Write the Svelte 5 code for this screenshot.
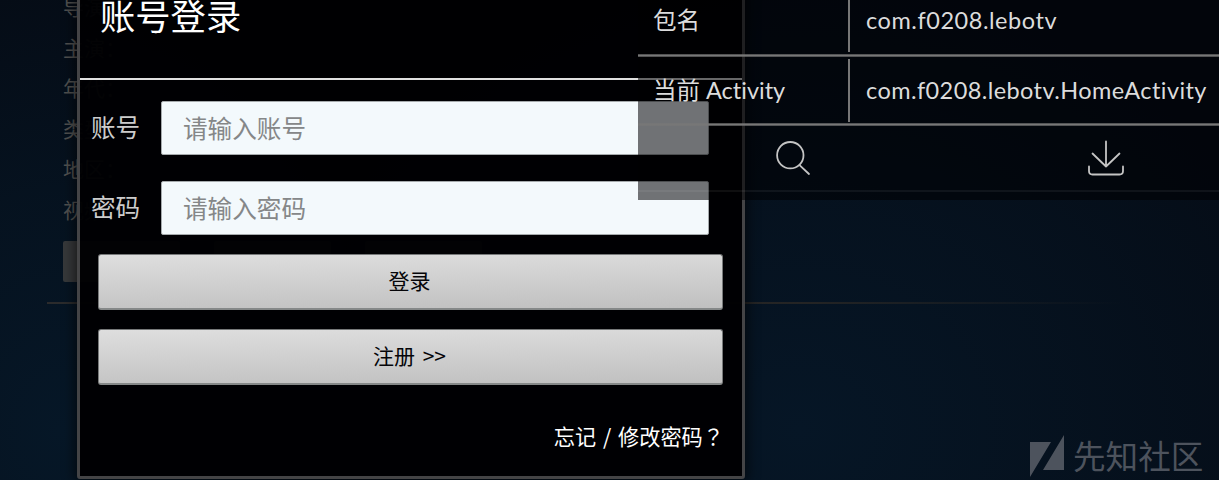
<script>
  const facts = ['导演：', '主演：', '年代：', '类型：', '地区：', '视频：'];
  const fields = [
    { label: '账号', hint: '请输入账号' },
    { label: '密码', hint: '请输入密码' }
  ];
  const rows = [
    { name: '包名', value: 'com.f0208.lebotv' },
    { name: '当前 Activity', value: 'com.f0208.lebotv.HomeActivity' }
  ];
</script>

<main class="screen">
  <section class="details">
    <div class="facts">
      {#each facts as fact}
        <p>{fact}</p>
      {/each}
    </div>
    <div class="tabs"><i></i><i></i><i></i></div>
    <hr />
  </section>

  <section class="dialog">
    <h1>账号登录</h1>
    <form onsubmit={(e) => e.preventDefault()}>
      {#each fields as field}
        <div class="field">
          <span class="label">{field.label}</span>
          <div class="box">{field.hint}</div>
        </div>
      {/each}
      <button class="first">登录</button>
      <button>注册 &gt;&gt;</button>
    </form>
    <p class="forgot">忘记 / 修改密码<span>？</span></p>
  </section>

  <aside class="inspector">
    {#each rows as row}
      <div class="row">
        <span class="name">{row.name}</span>
        <span class="value">{row.value}</span>
      </div>
    {/each}
    <div class="tools">
      <svg width="36" height="36" viewBox="0 0 36 36">
        <circle cx="15.3" cy="15.2" r="13.2" />
        <path d="M24.8 25.3L34 34" />
      </svg>
      <svg width="38" height="36" viewBox="0 0 38 36">
        <path d="M19 1.5v25M5.5 13.5L19 26.5L32.5 13.5M2 26.5v4.5q0 3.5 3.5 3.5h27q3.5 0 3.5-3.5v-4.5" />
      </svg>
    </div>
  </aside>

  <div class="brand">
    <svg width="34" height="42" viewBox="0 0 34 42">
      <path d="M0 7H21L0 42ZM34 0V35H13Z" />
    </svg>
    <span>先知社区</span>
  </div>
</main>

<style>
  :global(body) {
    margin: 0;
    background: #fff;
  }
  .screen {
    position: relative;
    width: 1219px;
    height: 480px;
    overflow: hidden;
    background:
      radial-gradient(ellipse 560px 480px at 800px 430px, #061626 0%, #06152499 50%, transparent 100%),
      radial-gradient(ellipse 330px 440px at 60px 430px, #061727 0%, #06162599 55%, transparent 100%),
      #050c16;
    font-family: 'Noto Sans CJK SC', sans-serif;
  }
  p,
  h1 {
    margin: 0;
    font-weight: 400;
  }
  .details {
    padding-left: 63px;
  }
  .facts {
    height: 241px;
    margin-top: -14px;
    margin-bottom: 14px;
    color: #50504f;
    font-size: 21px;
    line-height: 40.5px;
  }
  .tabs {
    display: flex;
    gap: 34px;
    height: 41px;
  }
  .tabs i {
    width: 117px;
    background: #36383a;
    border-radius: 2px;
  }
  hr {
    margin: 20px 0 0 -16px;
    border: 0;
    height: 2px;
    background: linear-gradient(90deg, #2b2b2c, #242424 65%, transparent 92%);
  }
  .dialog {
    position: absolute;
    left: 77px;
    top: -30px;
    box-sizing: border-box;
    width: 668px;
    height: 509px;
    border: 3px solid #444446;
    border-radius: 3px;
    background: rgba(0, 0, 2, 0.96);
    background-clip: padding-box;
    box-shadow: 0 0 12px 3px rgba(0, 0, 0, 0.55);
    color: #fff;
  }
  h1 {
    height: 105px;
    padding-left: 20px;
    border-bottom: 2px solid #e0e0e0;
    font-size: 35.3px;
    line-height: 84px;
  }
  form {
    padding-top: 21px;
  }
  .field {
    display: flex;
    align-items: center;
    height: 54px;
    margin: 0 0 26px 11px;
    font-size: 24.6px;
  }
  .label {
    width: 70px;
    height: 54px;
    color: #ccc;
    line-height: 51px;
  }
  .box {
    box-sizing: border-box;
    width: 548px;
    height: 54px;
    padding-left: 21px;
    border: 1px solid #a5aaac;
    border-radius: 2px;
    background: #f3f9fc;
    color: #858788;
    line-height: 50px;
  }
  button {
    display: block;
    box-sizing: border-box;
    width: 625px;
    height: 56px;
    margin: 19px 0 0 18px;
    padding: 0 2px 3px 0;
    border: 1px solid #77797a;
    border-bottom: 2px solid #858888;
    border-radius: 3px;
    background: linear-gradient(179deg, #dedede, #c0c0c0);
    color: #050508;
    font: 21px/50px 'Noto Sans CJK SC', sans-serif;
    word-spacing: 3px;
  }
  button.first {
    margin-top: -7px;
  }
  .forgot {
    margin-top: 35px;
    padding-right: 18px;
    text-align: right;
    font-size: 21.2px;
    line-height: 31px;
    word-spacing: 2px;
  }
  .forgot span {
    font-family: 'Noto Sans CJK TC', sans-serif;
  }
  .inspector {
    position: absolute;
    left: 638px;
    top: 0;
    width: 581px;
    height: 200px;
    overflow: hidden;
    background: rgba(0, 0, 2, 0.54);
    color: #dcdcdc;
    font: 23.5px/30px Lato, 'Noto Sans CJK SC', sans-serif;
  }
  .row {
    display: flex;
    align-items: center;
    box-sizing: border-box;
    height: 69px;
    padding-bottom: 3px;
    background: linear-gradient(#77777766, #777 34%, #777 66%, #77777766) bottom / 100% 3px no-repeat;
  }
  .row:first-child {
    height: 71px;
    margin-top: -14px;
  }
  .name {
    box-sizing: border-box;
    width: 212px;
    height: 63px;
    padding-left: 15px;
    border-right: 2px solid #777;
    line-height: 63px;
    font-variant-ligatures: none;
    white-space: nowrap;
  }
  .value {
    padding-left: 16px;
    white-space: nowrap;
    font-variant-ligatures: none;
    letter-spacing: 0.42px;
  }
  .row:first-child .value {
    letter-spacing: 0.55px;
  }
  .tools {
    display: flex;
    box-sizing: border-box;
    height: 66px;
    padding: 14px 94px 0 137px;
    justify-content: space-between;
    border-bottom: 2px solid rgba(255, 255, 255, 0.06);
  }
  .tools svg {
    fill: none;
    stroke: #c4c4c4;
    stroke-width: 1.8;
    stroke-linecap: round;
    stroke-linejoin: round;
  }
  .brand {
    position: absolute;
    left: 1030px;
    top: 435px;
    display: flex;
    gap: 9px;
    color: #4d535d;
    font-size: 32.6px;
    line-height: 39px;
  }
  .brand svg {
    fill: currentColor;
  }
</style>
